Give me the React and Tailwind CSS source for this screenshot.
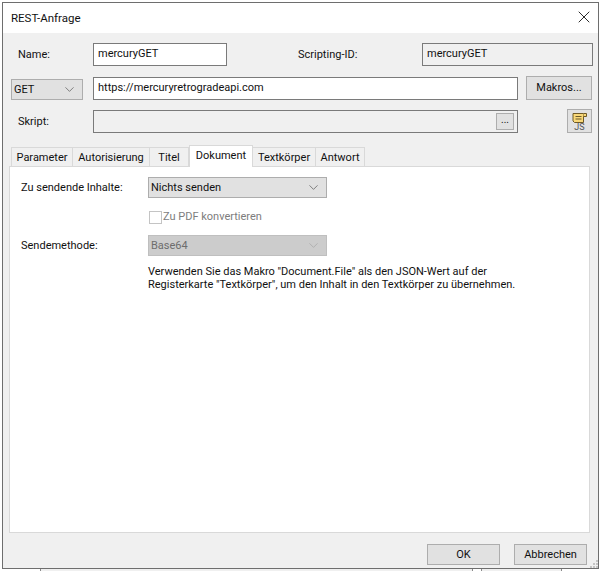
import React from "react";
import { X, ChevronDown } from "lucide-react";

function Select({ value, disabled, className }) {
  return (
    <div
      className={`flex items-center justify-between border h-[21px] pl-[2px] pr-[5px] ${
        disabled ? "bg-[#cccccc] border-[#bfbfbf] text-[#6d6d6d]" : "bg-[#e1e1e1] border-[#adadad] text-[#111]"
      } ${className}`}
    >
      <span className="pt-[1px]">{value}</span>
      <ChevronDown size={15} strokeWidth={1} className={disabled ? "text-[#a0a0a0]" : "text-[#444]"} />
    </div>
  );
}

function Tab({ label, width, active }) {
  return active ? (
    <div className={`${width} h-[22px] -mb-px z-10 bg-white border border-b-0 border-[#d9d9d9] flex items-start justify-center pt-[2px] text-[#111]`}>
      {label}
    </div>
  ) : (
    <div className={`${width} h-[19px] pt-[1px] bg-[#f0f0f0] border border-b-0 border-l-0 first:border-l border-[#d9d9d9] flex items-center justify-center text-[#111]`}>
      {label}
    </div>
  );
}

export default function App() {
  return (
    <div className="relative w-[602px] h-[571px] overflow-hidden bg-white font-['Roboto','Noto_Sans',sans-serif] text-[11px] leading-[16px] text-[#111]">
      <div className="ml-[2px] mt-[2px] w-[597px] h-[567px] border border-[#6e6e6e] bg-[#f0f0f0] flex flex-col">
        {/* title bar */}
        <div className="h-[30px] bg-white flex items-center justify-between pl-[8px] pr-[4px] shrink-0">
          <span className="text-[11.5px]">REST-Anfrage</span>
          <X size={20} strokeWidth={1} className="text-black -mt-[2px]" />
        </div>

        <div className="flex-1 flex flex-col pl-[6px] pr-[4px] relative">
          {/* name row */}
          <div className="flex items-center mt-[10px] h-[23px]">
            <span className="w-[84px] pl-[9px] mt-[1px]">Name:</span>
            <div className="w-[134px] h-[23px] bg-white border border-[#7a7a7a] pl-[4px] pt-[2px]">mercuryGET</div>
            <span className="ml-[71px] w-[124px] mt-[1px] text-[#111]">Scripting-ID:</span>
            <div className="w-[171px] h-[23px] bg-[#f0f0f0] border border-[#7a7a7a] pl-[4px] pt-[2px]">mercuryGET</div>
          </div>

          {/* url row */}
          <div className="flex items-center mt-[10px] h-[24px]">
            <Select value="GET" className="w-[72px] ml-[2px] mt-[2px]" />
            <div className="ml-[10px] w-[425px] h-[23px] bg-white border border-[#7a7a7a] pl-[4px] pt-[2px]">
              https://mercuryretrogradeapi.com
            </div>
            <div className="ml-[8px] w-[66px] h-[24px] bg-[#e1e1e1] border border-[#adadad] flex items-center justify-center">Makros...</div>
          </div>

          {/* script row */}
          <div className="flex items-center mt-[9px] h-[24px]">
            <span className="w-[84px] pl-[9px] mt-[1px]">Skript:</span>
            <div className="w-[425px] h-[23px] bg-[#f0f0f0] border border-[#7a7a7a] flex items-center justify-end pr-[3px]">
              <div className="w-[18px] h-[17px] bg-[#e1e1e1] border border-[#adadad] flex items-center justify-center text-[10px] leading-none pb-[3px]">...</div>
            </div>
            <div className="ml-[49px] w-[25px] h-[24px] bg-[#e1e1e1] border border-[#adadad] flex flex-col items-center pt-[3px]">
              <svg width="15" height="10" viewBox="0 0 15 10">
                <path d="M1 .5h10.5v9H2.5L1 8z" fill="#f9d878" stroke="#6f5a26" strokeWidth="1" />
                <path d="M11.5 .5h3v3h-3" fill="#f9d878" stroke="#6f5a26" strokeWidth="1" />
                <path d="M3.5 3.5h6M3.5 6h6" stroke="#6b5a2a" strokeWidth="1" />
              </svg>
              <span className="text-[9px] leading-[9px] text-[#555]">JS</span>
            </div>
          </div>

          {/* tabs */}
          <div className="flex items-end mt-[12px] pl-[2px]">
            <Tab label="Parameter" width="w-[62px]" />
            <Tab label="Autorisierung" width="w-[77px]" />
            <Tab label="Titel" width="w-[39px]" />
            <Tab label="Dokument" width="w-[64px]" active />
            <Tab label="Textkörper" width="w-[63px]" />
            <Tab label="Antwort" width="w-[49px]" />
          </div>

          {/* panel */}
          <div className="w-[581px] h-[367px] bg-white border border-[#d9d9d9] pt-[10px] pl-[11px]">
            <div className="flex items-center h-[21px]">
              <span className="w-[127px]">Zu sendende Inhalte:</span>
              <Select value="Nichts senden" className="w-[179px]" />
            </div>
            <div className="flex items-center h-[14px] mt-[12px] ml-[128px] text-[#7d7d7d]">
              <div className="w-[13px] h-[13px] bg-white border border-[#c4c4c4] mr-[1px]" />
              <span>Zu PDF konvertieren</span>
            </div>
            <div className="flex items-center h-[21px] mt-[11px]">
              <span className="w-[127px]">Sendemethode:</span>
              <Select value="Base64" disabled className="w-[179px]" />
            </div>
            <p className="mt-[9px] ml-[127px] w-[400px] leading-[13px]">
              Verwenden Sie das Makro "Document.File" als den JSON-Wert auf der Registerkarte "Textkörper", um den Inhalt in den Textkörper zu übernehmen.
            </p>
          </div>

          {/* footer */}
          <div className="flex justify-end gap-[14px] mt-[11px] pr-[7px]">
            <div className="w-[73px] h-[21px] bg-[#e1e1e1] border border-[#adadad] flex items-center justify-center">OK</div>
            <div className="w-[73px] h-[21px] bg-[#e1e1e1] border border-[#adadad] flex items-center justify-center">Abbrechen</div>
          </div>

          {/* resize grip */}
          <svg width="8" height="8" viewBox="0 0 8 8" className="absolute right-0 bottom-0">
            <path d="M6 0h2v2H6zM3 3h2v2H3zM6 3h2v2H6zM0 6h2v2H0zM3 6h2v2H3zM6 6h2v2H6z" fill="#c4c4c4" />
          </svg>
        </div>
      </div>
      {/* window behind peeking out */}
      <div className="flex ml-[40px] h-[2px] gap-[8px]">
        <div className="w-[433px] bg-[#f0f0f0] border-x border-[#8a8a8a]" />
        <div className="w-[81px] bg-[#f0f0f0] border-x border-[#8a8a8a]" />
      </div>
    </div>
  );
}
